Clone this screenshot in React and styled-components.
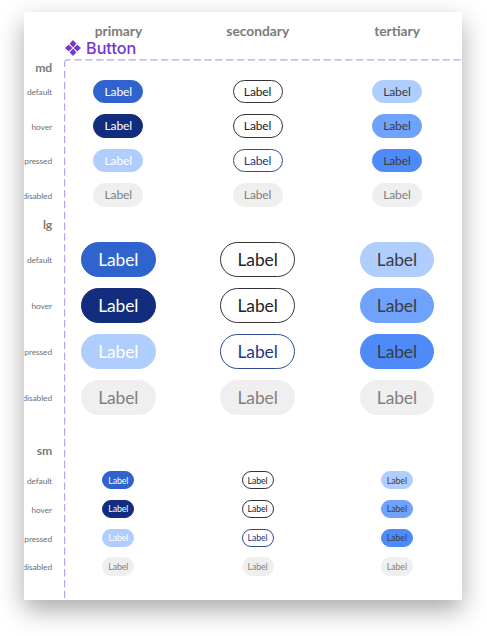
import React from "react";
import styled, { createGlobalStyle } from "styled-components";

const GlobalStyle = createGlobalStyle`
  * { box-sizing: border-box; }
  body {
    margin: 0;
    background: #fff;
    font-family: Lato, "Open Sans", sans-serif;
  }
`;

const Page = styled.main`
  width: 487px;
  height: 636px;
  padding: 12px 25px 36px 24px;
  overflow: hidden;
`;

const Elevation = styled.div`
  width: 438px;
  height: 588px;
  box-shadow: 0 10px 24px rgba(0, 0, 0, 0.34);
`;

const Board = styled.section`
  position: relative;
  width: 438px;
  height: 588px;
  overflow: hidden;
  background: #fff;
`;

const VariantColumns = styled.div`
  display: grid;
  grid-template-columns: repeat(3, 75px);
  column-gap: 64.3px;
  justify-items: center;
`;

const ColumnHeads = styled(VariantColumns)`
  height: 27px;
  padding: 9px 0 0 57px;
`;

const ColumnHead = styled.h2`
  margin: 0;
  font-size: 13.8px;
  line-height: 20px;
  font-weight: 700;
  color: #7b7b7b;
`;

const ComponentTitle = styled.div`
  display: flex;
  align-items: center;
  gap: 5px;
  height: 18px;
  margin-left: 41px;
  color: #7338d0;
  font: 500 16.2px/18px Inter, sans-serif;
`;

const DashedFrame = styled.div`
  position: absolute;
  inset: 47px 0 0 40px;
  pointer-events: none;

  svg { display: block; }
`;

const SizeGroup = styled.section`
  height: ${(p) => p.$height}px;
`;

const SizeName = styled.h3`
  width: 28px;
  height: ${(p) => p.$height}px;
  margin: 0;
  padding-top: 0.5px;
  font-size: 12.2px;
  line-height: 20px;
  font-weight: 700;
  letter-spacing: -0.2px;
  text-align: right;
  color: #7b7b7b;
`;

const StateRow = styled.div`
  display: flex;
  align-items: center;
  gap: 28.8px;
  height: ${(p) => p.$pitch}px;
`;

const StateName = styled.span`
  flex: none;
  display: flex;
  justify-content: flex-end;
  width: 28px;
  padding-top: 1.6px;
  font-size: 8.4px;
  line-height: 12px;
  letter-spacing: -0.1px;
  color: #707070;
`;

const metrics = {
  md: { width: 50, height: 23.4, font: 12 },
  lg: { width: 74.6, height: 35, font: 17.4 },
  sm: { width: 32, height: 18.4, font: 8.8 },
};

const PillButton = styled.button`
  display: flex;
  align-items: center;
  justify-content: center;
  width: ${(p) => metrics[p.$size].width}px;
  height: ${(p) => metrics[p.$size].height}px;
  padding: 0;
  border: 1px solid ${(p) => p.$look.line || p.$look.bg};
  border-radius: 99px;
  background: ${(p) => p.$look.bg};
  color: ${(p) => p.$look.fg};
  font-family: inherit;
  font-size: ${(p) => metrics[p.$size].font}px;
  letter-spacing: -0.1px;
  line-height: 1.25;
`;

const disabled = { bg: "#efefef", fg: "#808080" };

const looks = {
  default: [
    { bg: "#2f64ce", fg: "#fff" },
    { bg: "#fff", fg: "#222", line: "#333" },
    { bg: "#b0cefd", fg: "#383c43" },
  ],
  hover: [
    { bg: "#122d7e", fg: "#fff" },
    { bg: "#fff", fg: "#222", line: "#333" },
    { bg: "#6fa2fb", fg: "#383c43" },
  ],
  pressed: [
    { bg: "#b0cefd", fg: "#fff" },
    { bg: "#fff", fg: "#1c3788", line: "#2f4a96" },
    { bg: "#4f8bf8", fg: "#383c43" },
  ],
  disabled: [disabled, disabled, disabled],
};

const groups = [
  { size: "md", height: 157, head: 17.2, pitch: 34.5 },
  { size: "lg", height: 226.2, head: 22.4, pitch: 46 },
  { size: "sm", height: 148, head: 25.6, pitch: 28.8 },
];

function ComponentIcon() {
  return (
    <svg width="16" height="16" viewBox="0 0 16 16" fill="currentColor" stroke="currentColor" strokeWidth="1.2" strokeLinejoin="round">
      <path d="M8 .9 10.6 3.7 8 6.5 5.4 3.7zM8 9.5l2.6 2.8L8 15.1l-2.6-2.8zM3.7 5.4 6.5 8l-2.8 2.6L.9 8zM12.3 5.4 15.1 8l-2.8 2.6L9.5 8z" />
    </svg>
  );
}

export default function App() {
  return (
    <Page>
      <GlobalStyle />
      <Elevation>
        <Board>
          <ColumnHeads>
            <ColumnHead>primary</ColumnHead>
            <ColumnHead>secondary</ColumnHead>
            <ColumnHead>tertiary</ColumnHead>
          </ColumnHeads>
          <ComponentTitle>
            <ComponentIcon />
            Button
          </ComponentTitle>
          {groups.map((g) => (
            <SizeGroup key={g.size} $height={g.height}>
              <SizeName $height={g.head}>{g.size}</SizeName>
              {Object.keys(looks).map((state) => (
                <StateRow key={state} $pitch={g.pitch}>
                  <StateName>{state}</StateName>
                  <VariantColumns>
                    {looks[state].map((look, i) => (
                      <PillButton key={i} $size={g.size} $look={look}>Label</PillButton>
                    ))}
                  </VariantColumns>
                </StateRow>
              ))}
            </SizeGroup>
          ))}
          <DashedFrame>
            <svg width="398" height="541" fill="none" stroke="#b5a3f6" strokeWidth="1.2">
              <path d="M.6 8V4Q.6 .9 4 .9H6.5" />
              <path d="M10.4 .9H398M.6 11.9V540" strokeDasharray="7.4 3.43" />
            </svg>
          </DashedFrame>
        </Board>
      </Elevation>
    </Page>
  );
}
